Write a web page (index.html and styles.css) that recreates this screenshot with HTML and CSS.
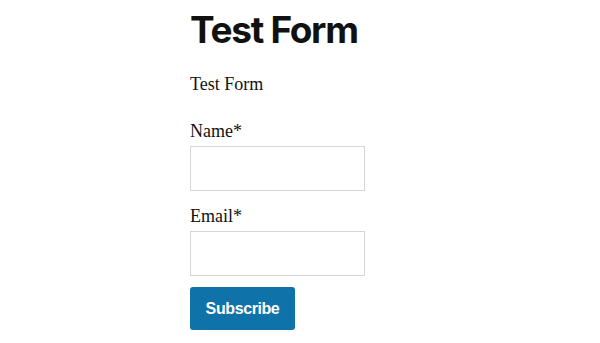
FILE: index.html
```html
<!DOCTYPE html>
<html lang="en">
<head>
  <meta charset="utf-8">
  <meta name="viewport" content="width=device-width, initial-scale=1.0">
  <title>Test Form</title>
  <link rel="stylesheet" href="styles.css">
</head>
<body>
  <!-- Page content -->
  <div class="entry">
    <h1 class="entry-title">Test Form</h1>
    <p class="entry-intro">Test Form</p>

    <!-- Signup form -->
    <form class="signup-form" onsubmit="return false">
      <label for="name" class="field-label">Name*</label>
      <input type="text" id="name" class="field-input">

      <label for="email" class="field-label email-label">Email*</label>
      <input type="email" id="email" class="field-input">

      <button type="submit" class="submit-button">Subscribe</button>
    </form>
  </div>
</body>
</html>
```

FILE: styles.css
```css
body {
  margin: 0;
  background-color: #fff;
  color: #111;
  font-family: "Liberation Serif", serif;
}

.entry {
  width: 220px;
  margin: 0 auto;
}

.entry-title {
  font-family: Inter, "Liberation Sans", sans-serif;
  font-weight: 700;
  font-size: 37px;
  line-height: 1;
  letter-spacing: -1.3px;
  margin: 11px 0 0;
  color: #111;
}

.entry-intro {
  font-size: 18px;
  line-height: 24px;
  margin: 24px 0 0;
}

.signup-form {
  display: flex;
  flex-direction: column;
  align-items: flex-start;
  margin-top: 23px;
}

.field-label {
  font-size: 18px;
  line-height: 24px;
}

.email-label {
  margin-top: 13px;
}

.field-input {
  box-sizing: border-box;
  width: 175px;
  height: 45px;
  margin-top: 3px;
  border: 1px solid #d6d6d6;
  border-radius: 0;
  padding: 0 10px;
  background-color: #fff;
}

.submit-button {
  box-sizing: border-box;
  width: 105px;
  height: 43px;
  margin-top: 11px;
  border: none;
  border-radius: 3px;
  background-color: #0f72a8;
  color: #fff;
  font-family: "Liberation Sans", Arial, sans-serif;
  font-weight: 700;
  font-size: 16px;
  letter-spacing: -0.4px;
  cursor: pointer;
}
```
